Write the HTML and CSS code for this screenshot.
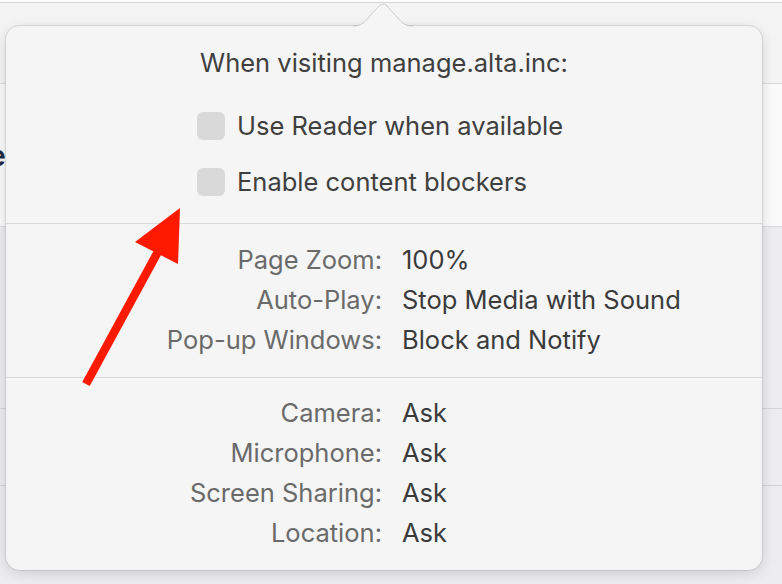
FILE: index.html
```html
<!DOCTYPE html>
<html lang="en">
<head>
<meta charset="utf-8">
<title>Website settings</title>
<link rel="stylesheet" href="styles.css">
</head>
<body>
<div class="page">
  <div class="topbar"></div>
  <div class="toolbar"></div>
  <div class="content">
    <div class="content-top"><span class="cut-letter">e</span></div>
    <div class="content-mid"></div>
    <div class="content-row"></div>
    <div class="content-row last"></div>
  </div>
</div>

<div class="popover">
  <svg class="notch" width="60" height="25" viewBox="0 0 60 25">
    <path class="notch-fill" d="M0 24 C8 24 11 21 16 15 L26 4 Q30 0 34 4 L44 15 C49 21 52 24 60 24 L60 25 L0 25 Z"/>
    <path class="notch-line" d="M0 24 C8 24 11 21 16 15 L26 4 Q30 0 34 4 L44 15 C49 21 52 24 60 24"/>
  </svg>
  <div class="title">When visiting manage.alta.inc:</div>
  <div class="checks">
    <label class="check"><span class="box"></span>Use Reader when available</label>
    <label class="check"><span class="box"></span>Enable content blockers</label>
  </div>
  <div class="section grid">
    <div class="label">Page Zoom:</div><div class="value">100%</div>
    <div class="label">Auto-Play:</div><div class="value">Stop Media with Sound</div>
    <div class="label">Pop-up Windows:</div><div class="value">Block and Notify</div>
  </div>
  <div class="section grid last">
    <div class="label">Camera:</div><div class="value">Ask</div>
    <div class="label">Microphone:</div><div class="value">Ask</div>
    <div class="label">Screen Sharing:</div><div class="value">Ask</div>
    <div class="label">Location:</div><div class="value">Ask</div>
  </div>
</div>

<svg class="annotation" width="782" height="584" viewBox="0 0 782 584">
  <line x1="86" y1="384" x2="160" y2="248" stroke="#fe1a00" stroke-width="8.5"/>
  <polygon points="180,208 135,242 178,264" fill="#fe1a00"/>
</svg>
</body>
</html>
```
FILE: styles.css
```css
html, body {
  margin: 0;
  padding: 0;
}
body {
  width: 782px;
  height: 584px;
  overflow: hidden;
  position: relative;
  background: #ffffff;
  font-family: Inter, "Noto Sans", "Liberation Sans", sans-serif;
}

/* background page */
.page {
  display: flex;
  flex-direction: column;
  height: 584px;
}
.topbar {
  height: 2px;
  background: #ffffff;
  border-bottom: 1px solid #d6d6d6;
}
.toolbar {
  height: 80px;
  background: #f4f4f4;
  border-bottom: 1px solid #d9d9d9;
}
.content {
  flex: 1;
  display: flex;
  flex-direction: column;
  background: #fafafa;
}
.content-top {
  height: 142px;
  border-bottom: 1px solid #dcdcdf;
  display: flex;
  align-items: flex-start;
}
.cut-letter {
  margin-left: -11px;
  margin-top: 55px;
  font: 700 30px "Liberation Sans", sans-serif;
  color: #1f2a44;
}
.content-mid {
  height: 181px;
  background: #ededf0;
  border-bottom: 1px solid #d4d4d8;
}
.content-row {
  height: 76px;
  background: #ededf0;
  border-bottom: 1px solid #d4d4d8;
}
.content-row.last {
  flex: 1;
  border-bottom: none;
}

/* popover */
.popover {
  position: absolute;
  left: 6px;
  top: 26px;
  width: 756px;
  height: 544px;
  box-sizing: border-box;
  background: #f5f5f5;
  border-radius: 14px;
  box-shadow: 0 0 0 1px rgba(0, 0, 0, 0.09), 0 3px 14px rgba(0, 0, 0, 0.14);
  display: flex;
  flex-direction: column;
  color: #3d3d3d;
  font-size: 25.5px;
}
.notch {
  position: absolute;
  left: 347px;
  top: -24px;
  overflow: visible;
}
.notch-fill {
  fill: #f5f5f5;
}
.notch-line {
  fill: none;
  stroke: rgba(0, 0, 0, 0.16);
  stroke-width: 1;
}

.title {
  padding-top: 17px;
  height: 40px;
  line-height: 40px;
  text-align: center;
  color: #3f3f3f;
}
.checks {
  display: flex;
  flex-direction: column;
  gap: 16px;
  padding: 23px 0 21px 191px;
  border-bottom: 1px solid #d9d9d9;
}
.check {
  display: flex;
  align-items: center;
  gap: 12px;
  height: 40px;
  line-height: 40px;
  color: #3f3f3f;
}
.box {
  width: 28px;
  height: 28px;
  border-radius: 6px;
  background: #d9d9d9;
  flex: none;
}

.grid {
  display: grid;
  grid-template-columns: 376px 1fr;
  column-gap: 20px;
  grid-auto-rows: 40px;
  line-height: 40px;
  padding: 16px 0 17px;
  border-bottom: 1px solid #d9d9d9;
}
.grid.last {
  border-bottom: none;
  padding-top: 15px;
}
.label {
  text-align: right;
  color: #6a6a6a;
}
.value {
  color: #3b3b3b;
}

.annotation {
  position: absolute;
  left: 0;
  top: 0;
  pointer-events: none;
}
```
